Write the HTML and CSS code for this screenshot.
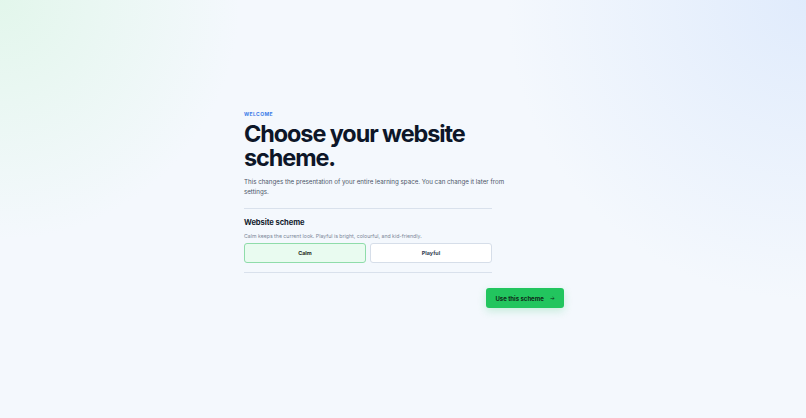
FILE: index.html
```html
<!DOCTYPE html>
<html lang="en">
<head>
    <meta charset="UTF-8">
    <meta name="viewport" content="width=device-width, initial-scale=1.0">
    <title>Choose your website scheme</title>
    <link rel="stylesheet" href="styles.css">
</head>
<body>
    <main class="page">
        <div class="onboarding">
            <!-- Intro -->
            <header class="intro">
                <p class="eyebrow">Welcome</p>
                <h1>Choose your website scheme.</h1>
                <p class="lead">This changes the presentation of your entire learning space. You can change it later from settings.</p>
            </header>

            <!-- Scheme picker -->
            <section class="scheme-section">
                <h2>Website scheme</h2>
                <p class="hint">Calm keeps the current look. Playful is bright, colourful, and kid-friendly.</p>
                <div class="scheme-options">
                    <button type="button" class="scheme-option selected">Calm</button>
                    <button type="button" class="scheme-option">Playful</button>
                </div>
            </section>

            <div class="actions">
                <button type="button" class="primary-button">Use this scheme <span class="arrow">→</span></button>
            </div>
        </div>
    </main>
</body>
</html>
```

FILE: styles.css
```css
* {
    box-sizing: border-box;
}

html, body {
    height: 100%;
}

body {
    margin: 0;
    font-family: Inter, "Noto Sans", sans-serif;
    color: #0f172a;
    background-color: #f4f8fd;
    background-image:
        radial-gradient(circle at 0% 0%, rgba(222, 246, 231, 0.8) 0, rgba(222, 246, 231, 0) 240px),
        radial-gradient(circle at 100% 0%, rgba(222, 234, 252, 0.9) 0, rgba(222, 234, 252, 0) 300px);
}

.page {
    min-height: 100%;
    display: flex;
    align-items: center;
    justify-content: center;
    padding-left: 2px;
}

.onboarding {
    width: 320px;
    margin-top: 1px;
}

.intro {
    max-width: 266px;
}

.eyebrow {
    margin: 0 0 5px;
    font-size: 5px;
    font-weight: 700;
    letter-spacing: 0.08em;
    text-transform: uppercase;
    color: #3b7be8;
}

h1 {
    margin: 0 0 7px;
    font-size: 23.4px;
    line-height: 24px;
    font-weight: 700;
    letter-spacing: -0.045em;
    color: #0d1628;
}

.lead {
    margin: 0;
    font-size: 6.2px;
    line-height: 10px;
    color: #4a5568;
}

.scheme-section {
    width: 248px;
    margin-top: 11px;
    padding: 9px 0 9px;
    border-top: 1px solid #d9e1ec;
    border-bottom: 1px solid #d9e1ec;
}

h2 {
    margin: 0 0 4px;
    font-size: 7.6px;
    line-height: 10px;
    font-weight: 700;
    letter-spacing: -0.01em;
    color: #111a2c;
}

.hint {
    margin: 0 0 3px;
    font-size: 5.2px;
    line-height: 8px;
    color: #7b8798;
}

.scheme-options {
    display: grid;
    grid-template-columns: 1fr 1fr;
    gap: 4px;
}

.scheme-option {
    height: 20px;
    padding: 0;
    font-family: inherit;
    font-size: 5.4px;
    font-weight: 700;
    color: #344054;
    background-color: #fff;
    border: 1px solid #d6dee9;
    border-radius: 3px;
    cursor: pointer;
}

.scheme-option.selected {
    color: #1e2a22;
    background-color: #e9fbf0;
    border-color: #8fdcaa;
}

.actions {
    display: flex;
    justify-content: flex-end;
    margin-top: 15px;
}

.primary-button {
    display: flex;
    align-items: center;
    gap: 6px;
    height: 20px;
    padding: 0 9px;
    font-family: inherit;
    font-size: 6px;
    font-weight: 700;
    color: #0f2a18;
    background-color: #22c55e;
    border: none;
    border-radius: 3px;
    box-shadow: 0 3px 8px rgba(34, 197, 94, 0.22);
    cursor: pointer;
}

.arrow {
    font-weight: 400;
    font-size: 5.5px;
}
```
